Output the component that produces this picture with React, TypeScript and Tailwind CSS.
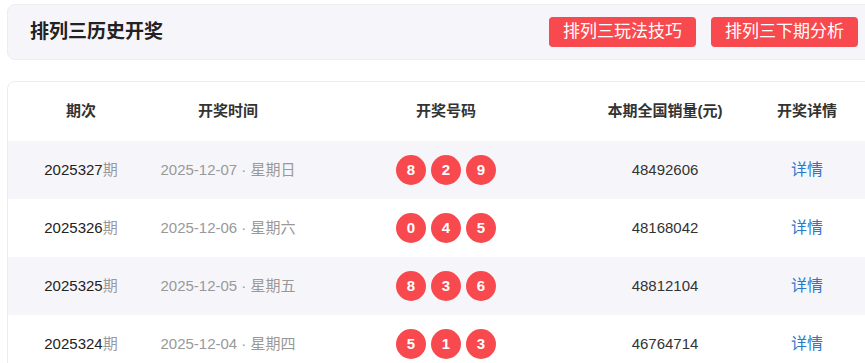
const rows = [
  { issue: '2025327', date: '2025-12-07', week: '星期日', balls: [8, 2, 9], sales: '48492606' },
  { issue: '2025326', date: '2025-12-06', week: '星期六', balls: [0, 4, 5], sales: '48168042' },
  { issue: '2025325', date: '2025-12-05', week: '星期五', balls: [8, 3, 6], sales: '48812104' },
  { issue: '2025324', date: '2025-12-04', week: '星期四', balls: [5, 1, 3], sales: '46764714' },
];

const cols = 'grid grid-cols-[146px_148px_288px_150px_134px]';

export default function App() {
  return (
    <div
      className="h-[363px] w-[865px] overflow-hidden bg-white"
      style={{ fontFamily: '"Liberation Sans", "Noto Sans CJK SC", sans-serif' }}>
      <div className="w-[890px] pl-[7px] pt-[4px]">
        <div className="flex h-[56px] items-center justify-between rounded-lg border border-[#ededf0] bg-[#f6f6fa] pl-[22px] pr-[31px]">
          <h1 className="text-[19px] font-bold text-[#222]">排列三历史开奖</h1>
          <div className="flex items-center gap-[15px]">
            <button className="h-[30px] w-[147px] rounded-[4px] bg-[#f8494e] text-[17px] text-white">排列三玩法技巧</button>
            <button className="h-[30px] w-[147px] rounded-[4px] bg-[#f8494e] text-[17px] text-white">排列三下期分析</button>
          </div>
        </div>

        <div className="mt-[21px] overflow-hidden rounded-lg border border-[#ededf0] bg-white">
          <div className={`${cols} h-[59px] items-center text-center text-[15px] font-bold text-[#333]`}>
            <div>期次</div>
            <div>开奖时间</div>
            <div>开奖号码</div>
            <div>本期全国销量(元)</div>
            <div>开奖详情</div>
          </div>
          {rows.map((r, i) => (
            <div
              key={r.issue}
              className={`${cols} h-[58px] items-center text-center text-[15px] ${i % 2 === 0 ? 'bg-[#f6f6fa]' : 'bg-white'}`}>
              <div className="text-[#222]">
                {r.issue}
                <span className="text-[#999]">期</span>
              </div>
              <div className="text-[#999]">{`${r.date} · ${r.week}`}</div>
              <div className="flex items-center justify-center gap-[5px]">
                {r.balls.map((b, j) => (
                  <span
                    key={j}
                    className="flex h-[30px] w-[30px] items-center justify-center rounded-full bg-[#f8494e] text-[15px] font-bold text-white">
                    {b}
                  </span>
                ))}
              </div>
              <div className="text-[#333]">{r.sales}</div>
              <div className="text-[16px] text-[#2a78cc]">详情</div>
            </div>
          ))}
        </div>
      </div>
    </div>
  );
}
